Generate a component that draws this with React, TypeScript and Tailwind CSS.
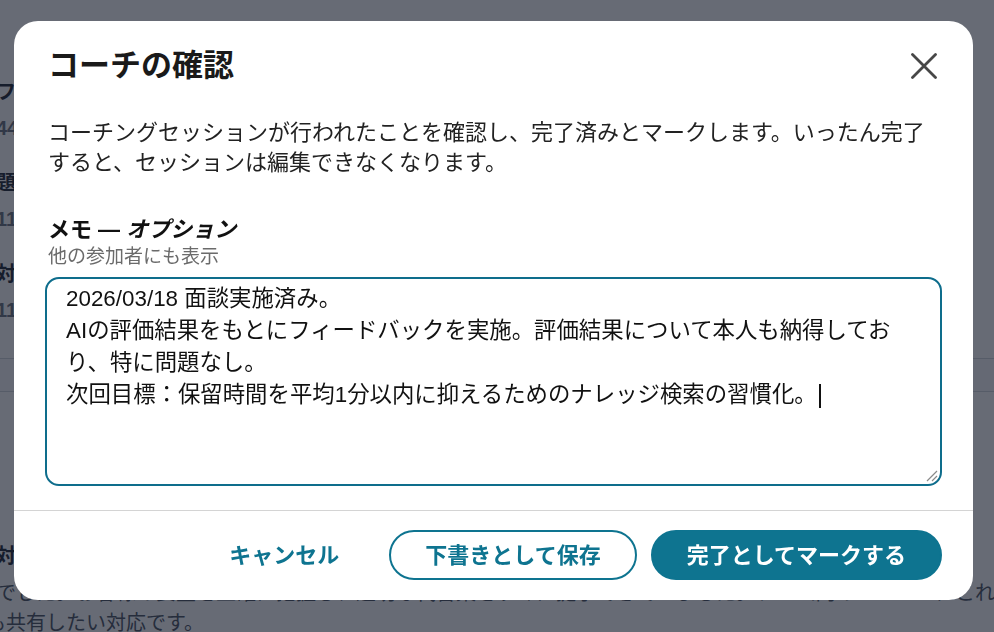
import { useState } from "react";

const FONT = "font-['Liberation_Sans','Noto_Sans_CJK_JP',sans-serif]";

const memoText = [
  "2026/03/18 面談実施済み。",
  "AIの評価結果をもとにフィードバックを実施。評価結果について本人も納得しており、特に問題なし。",
  "次回目標：保留時間を平均1分以内に抑えるためのナレッジ検索の習慣化。",
];

// 背景のページ（モーダルの後ろに見える部分）
function BackgroundPage() {
  const stats = [
    { label: "フィードバック", value: "44件" },
    { label: "題材の数", value: "11件" },
    { label: "対応件数", value: "11件" },
  ];

  return (
    <div className="min-h-screen bg-white overflow-hidden">
      <div className="-ml-[4px] pt-[78px]">
        {stats.map((s, i) => (
          <div key={s.label} className={i === 0 ? "" : "mt-[27px]"}>
            <p className="text-[20px] leading-[28px] font-bold text-[#1f2937]">
              {s.label}
            </p>
            <p className="mt-[8px] text-[20px] leading-[28px] font-bold text-[#6b7280]">
              {s.value}
            </p>
          </div>
        ))}
      </div>

      <div className="mt-[34px] h-[34px] border-y border-[#d1d5db] bg-[#f9fafb]" />

      <div className="mt-[150px] -ml-[4px]">
        <p className="text-[20px] leading-[28px] font-bold text-[#1f2937]">
          対応の良かった点
        </p>
        <p className="mt-[8px] text-[20px] leading-[30px] text-[#4b5563] whitespace-nowrap">
          でした。お客様の要望を正確に把握し、適切な代替案をすぐに提示できていました。チーム内のメンバーにこれは
        </p>
        <p className="-ml-[10px] text-[20px] leading-[30px] text-[#4b5563] whitespace-nowrap">
          も共有したい対応です。
        </p>
      </div>
    </div>
  );
}

function CloseIcon() {
  return (
    <svg width="26" height="26" viewBox="0 0 26 26" fill="none">
      <path
        d="M1.5 1.5L24.5 24.5M24.5 1.5L1.5 24.5"
        stroke="#474747"
        strokeWidth="2.8"
        strokeLinecap="round"
      />
    </svg>
  );
}

export default function App() {
  const [open, setOpen] = useState(true);

  return (
    <div className={`relative ${FONT}`}>
      <BackgroundPage />

      {open && (
        <div className="fixed inset-0 bg-[#111827]/[0.64] flex items-start pt-[21px] pl-[14px]">
          <div
            role="dialog"
            aria-modal="true"
            className="w-[959px] bg-white rounded-[24px] flex flex-col"
          >
            <div className="px-[31px] pt-[25px] pb-[24px]">
              {/* ヘッダー */}
              <div className="flex items-center justify-between pl-[3px]">
                <h2 className="text-[31px] leading-[40px] font-bold text-[#1a1a1a]">
                  コーチの確認
                </h2>
                <button
                  type="button"
                  aria-label="閉じる"
                  onClick={() => setOpen(false)}
                  className="mr-[3px] p-[2px]"
                >
                  <CloseIcon />
                </button>
              </div>

              <p className="mt-[32px] px-[3px] text-[22px] leading-[30px] text-[#222222]">
                コーチングセッションが行われたことを確認し、完了済みとマークします。いったん完了すると、セッションは編集できなくなります。
              </p>

              {/* メモ */}
              <div className="mt-[38px] px-[3px]">
                <label className="block text-[22px] leading-[28px] font-bold text-[#111111]">
                  メモ — <span className="italic">オプション</span>
                </label>
                <p className="text-[19px] leading-[26px] text-[#6b6b6b]">
                  他の参加者にも表示
                </p>
              </div>

              <div
                role="textbox"
                aria-multiline="true"
                className="relative mt-[7px] h-[209px] border-2 border-[#0e6d8c] rounded-[14px] px-[19px] pt-[4px] text-[22.4px] leading-[32px] text-[#111111] whitespace-pre-wrap"
              >
                {memoText.map((line, i) => (
                  <div key={i}>
                    {line}
                    {i === memoText.length - 1 && (
                      <span className="inline-block align-middle ml-[2px] w-[2px] h-[24px] bg-[#111111]" />
                    )}
                  </div>
                ))}

                {/* リサイズハンドル */}
                <svg
                  className="absolute right-[2px] bottom-[2px]"
                  width="14"
                  height="14"
                  viewBox="0 0 14 14"
                >
                  <path
                    d="M13 3L3 13M13 8L8 13"
                    stroke="#8a8a8a"
                    strokeWidth="1.2"
                  />
                </svg>
              </div>
            </div>

            {/* フッター */}
            <div className="border-t border-[#d4d4d4] px-[31px] pt-[19px] pb-[20px] flex items-center justify-end gap-[14px]">
              <button
                type="button"
                onClick={() => setOpen(false)}
                className="h-[50px] px-[36px] text-[22px] font-bold text-[#0e7490]"
              >
                キャンセル
              </button>
              <button
                type="button"
                className="h-[50px] px-[34px] rounded-full border-2 border-[#0e7490] bg-white text-[22px] font-bold text-[#0e7490]"
              >
                下書きとして保存
              </button>
              <button
                type="button"
                className="h-[50px] px-[34px] rounded-full border-2 border-[#0e7490] bg-[#0e7490] text-[22px] font-bold text-white"
              >
                完了としてマークする
              </button>
            </div>
          </div>
        </div>
      )}
    </div>
  );
}
